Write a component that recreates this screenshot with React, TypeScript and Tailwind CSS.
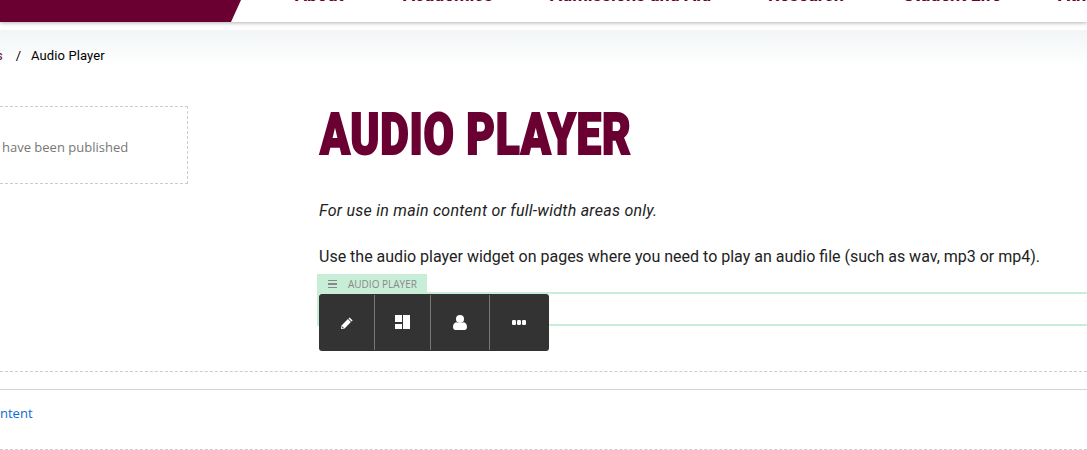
const navItems = [
  { label: 'About', width: 'w-[108px]' },
  { label: 'Academics', width: 'w-[147px]' },
  { label: 'Admissions and Aid', width: 'w-[218px]' },
  { label: 'Research', width: 'w-[135px]' },
  { label: 'Student Life', width: 'w-[155px]' },
  { label: 'Athletics', width: 'w-[90px]' },
];

const PencilIcon = () => (
  <svg width="12" height="12" viewBox="0 0 12 12" fill="currentColor">
    <path d="M8.6 0.4 11.6 3.4 10.5 4.5 7.5 1.5Z" />
    <path d="M6.9 2.1 9.9 5.1 3.6 11.4 0.2 12 0 11.8 0.6 8.4Z" />
    <path d="M1.3 9.2 2.8 10.7 1.6 11 1 10.4Z" fill="#333" />
  </svg>
);

const LayoutIcon = () => (
  <svg width="15" height="14" viewBox="0 0 15 14" fill="currentColor">
    <rect x="0" y="0" width="7" height="7" />
    <rect x="0" y="9" width="7" height="5" />
    <rect x="8" y="0" width="7" height="14" />
  </svg>
);

const UserIcon = () => (
  <svg width="14" height="15" viewBox="0 0 14 15" fill="currentColor">
    <circle cx="7" cy="4" r="4" />
    <path d="M3.5 7.2C4.5 8.2 9.5 8.2 10.5 7.2 12.8 7.6 14 9.4 14 12 14 14 13 15 11.5 15L2.5 15C1 15 0 14 0 12 0 9.4 1.2 7.6 3.5 7.2Z" />
  </svg>
);

const DotsIcon = () => (
  <svg width="14" height="5" viewBox="0 0 14 5" fill="currentColor">
    <rect x="0" y="0" width="4" height="5" rx="1.2" />
    <rect x="5" y="0" width="4" height="5" rx="1.2" />
    <rect x="10" y="0" width="4" height="5" rx="1.2" />
  </svg>
);

const Toolbar = () => (
  <div className="absolute left-[2px] top-[20px] flex h-[57px] w-[230px] items-center rounded-[3px] bg-[#333] py-[1px] text-white">
    <div className="flex h-full w-[56px] items-center justify-center border-r border-[#777]">
      <PencilIcon />
    </div>
    <div className="flex h-full w-[56px] items-center justify-center border-r border-[#777] pb-[2px]">
      <LayoutIcon />
    </div>
    <div className="flex h-full w-[59px] items-center justify-center border-r border-[#777]">
      <UserIcon />
    </div>
    <div className="flex h-full w-[59px] items-center justify-center pr-[2px]">
      <DotsIcon />
    </div>
  </div>
);

export default function App() {
  return (
    <div className="h-[450px] w-[1087px] overflow-hidden bg-white font-['Roboto',sans-serif]">
      <header className="relative flex h-[22px] overflow-hidden bg-white shadow-[0_1px_4px_rgba(0,0,0,0.3)]">
        <div className="h-full w-[241px] shrink-0 bg-[#6a0032] [clip-path:polygon(0_0,100%_0,231px_100%,0_100%)]" />
        <nav className="-mt-[17px] ml-[54px] flex text-[18px] font-bold leading-[24px] text-[#6a0032]">
          {navItems.map((item) => (
            <span key={item.label} className={`${item.width} shrink-0 whitespace-nowrap`}>
              {item.label}
            </span>
          ))}
        </nav>
      </header>

      <div className="mt-[8px] flex h-[36px] items-center bg-gradient-to-b from-[#f2f5f6] to-white pt-[16px] text-[13px] text-black">
        <span className="-ml-[4px] text-[#6a0032]">s</span>
        <span className="ml-[13px]">/</span>
        <span className="ml-[10px] tracking-[0.1px]">Audio Player</span>
      </div>

      <main className="flex">
        <aside className="mt-[40px] h-[78px] w-[188px] shrink-0 border-y border-r border-dashed border-[#ccc] font-['Open_Sans',sans-serif] text-[13px] text-[#777]">
          <p className="ml-[2px] mt-[31px]">have been published</p>
        </aside>
        <section className="ml-[131px] flex-1">
          <h1 className="ml-[1px] mt-[33px] origin-left scale-x-[.76] whitespace-nowrap text-[58px] font-black uppercase leading-[70px] tracking-[0.9px] text-[#6a0032] [-webkit-text-stroke:2px_#6a0032]">
            Audio Player
          </h1>
          <p className="mt-[30px] text-[16px] italic leading-[24px] tracking-[0.26px] text-[#222]">
            For use in main content or full-width areas only.
          </p>
          <p className="mt-[22px] whitespace-nowrap text-[16px] leading-[24px] text-[#222]">
            Use the audio player widget on pages where you need to play an audio file (such as wav, mp3 or mp4).
          </p>
          <div className="relative -ml-[2px] mt-[5px] h-[52px]">
            <div className="flex h-[20px] w-[110px] items-center bg-[#c8eed8] pl-[11px] font-['Open_Sans',sans-serif] text-[10px] text-[#888]">
              <span className="mr-[11px] flex w-[9px] flex-col gap-[2px]">
                <span className="h-[1.5px] bg-[#888]" />
                <span className="h-[1.5px] bg-[#888]" />
                <span className="h-[1.5px] bg-[#888]" />
              </span>
              AUDIO PLAYER
            </div>
            <div className="absolute left-0 top-[18px] h-[34px] w-[770px] border-y-2 border-l-2 border-[#c8eed8]" />
            <Toolbar />
          </div>
        </section>
      </main>

      <div className="mt-[45px] border-t border-dashed border-[#ccc]" />
      <div className="mt-[17px] h-[60px] border-t border-t-[#d0d5d6] pt-[14px] font-['Open_Sans',sans-serif] text-[13px] text-[#0b6bd6]">
        <span className="-ml-[16px] inline-block">Content</span>
      </div>
      <div className="border-t border-dashed border-[#ccc]" />
    </div>
  );
}
